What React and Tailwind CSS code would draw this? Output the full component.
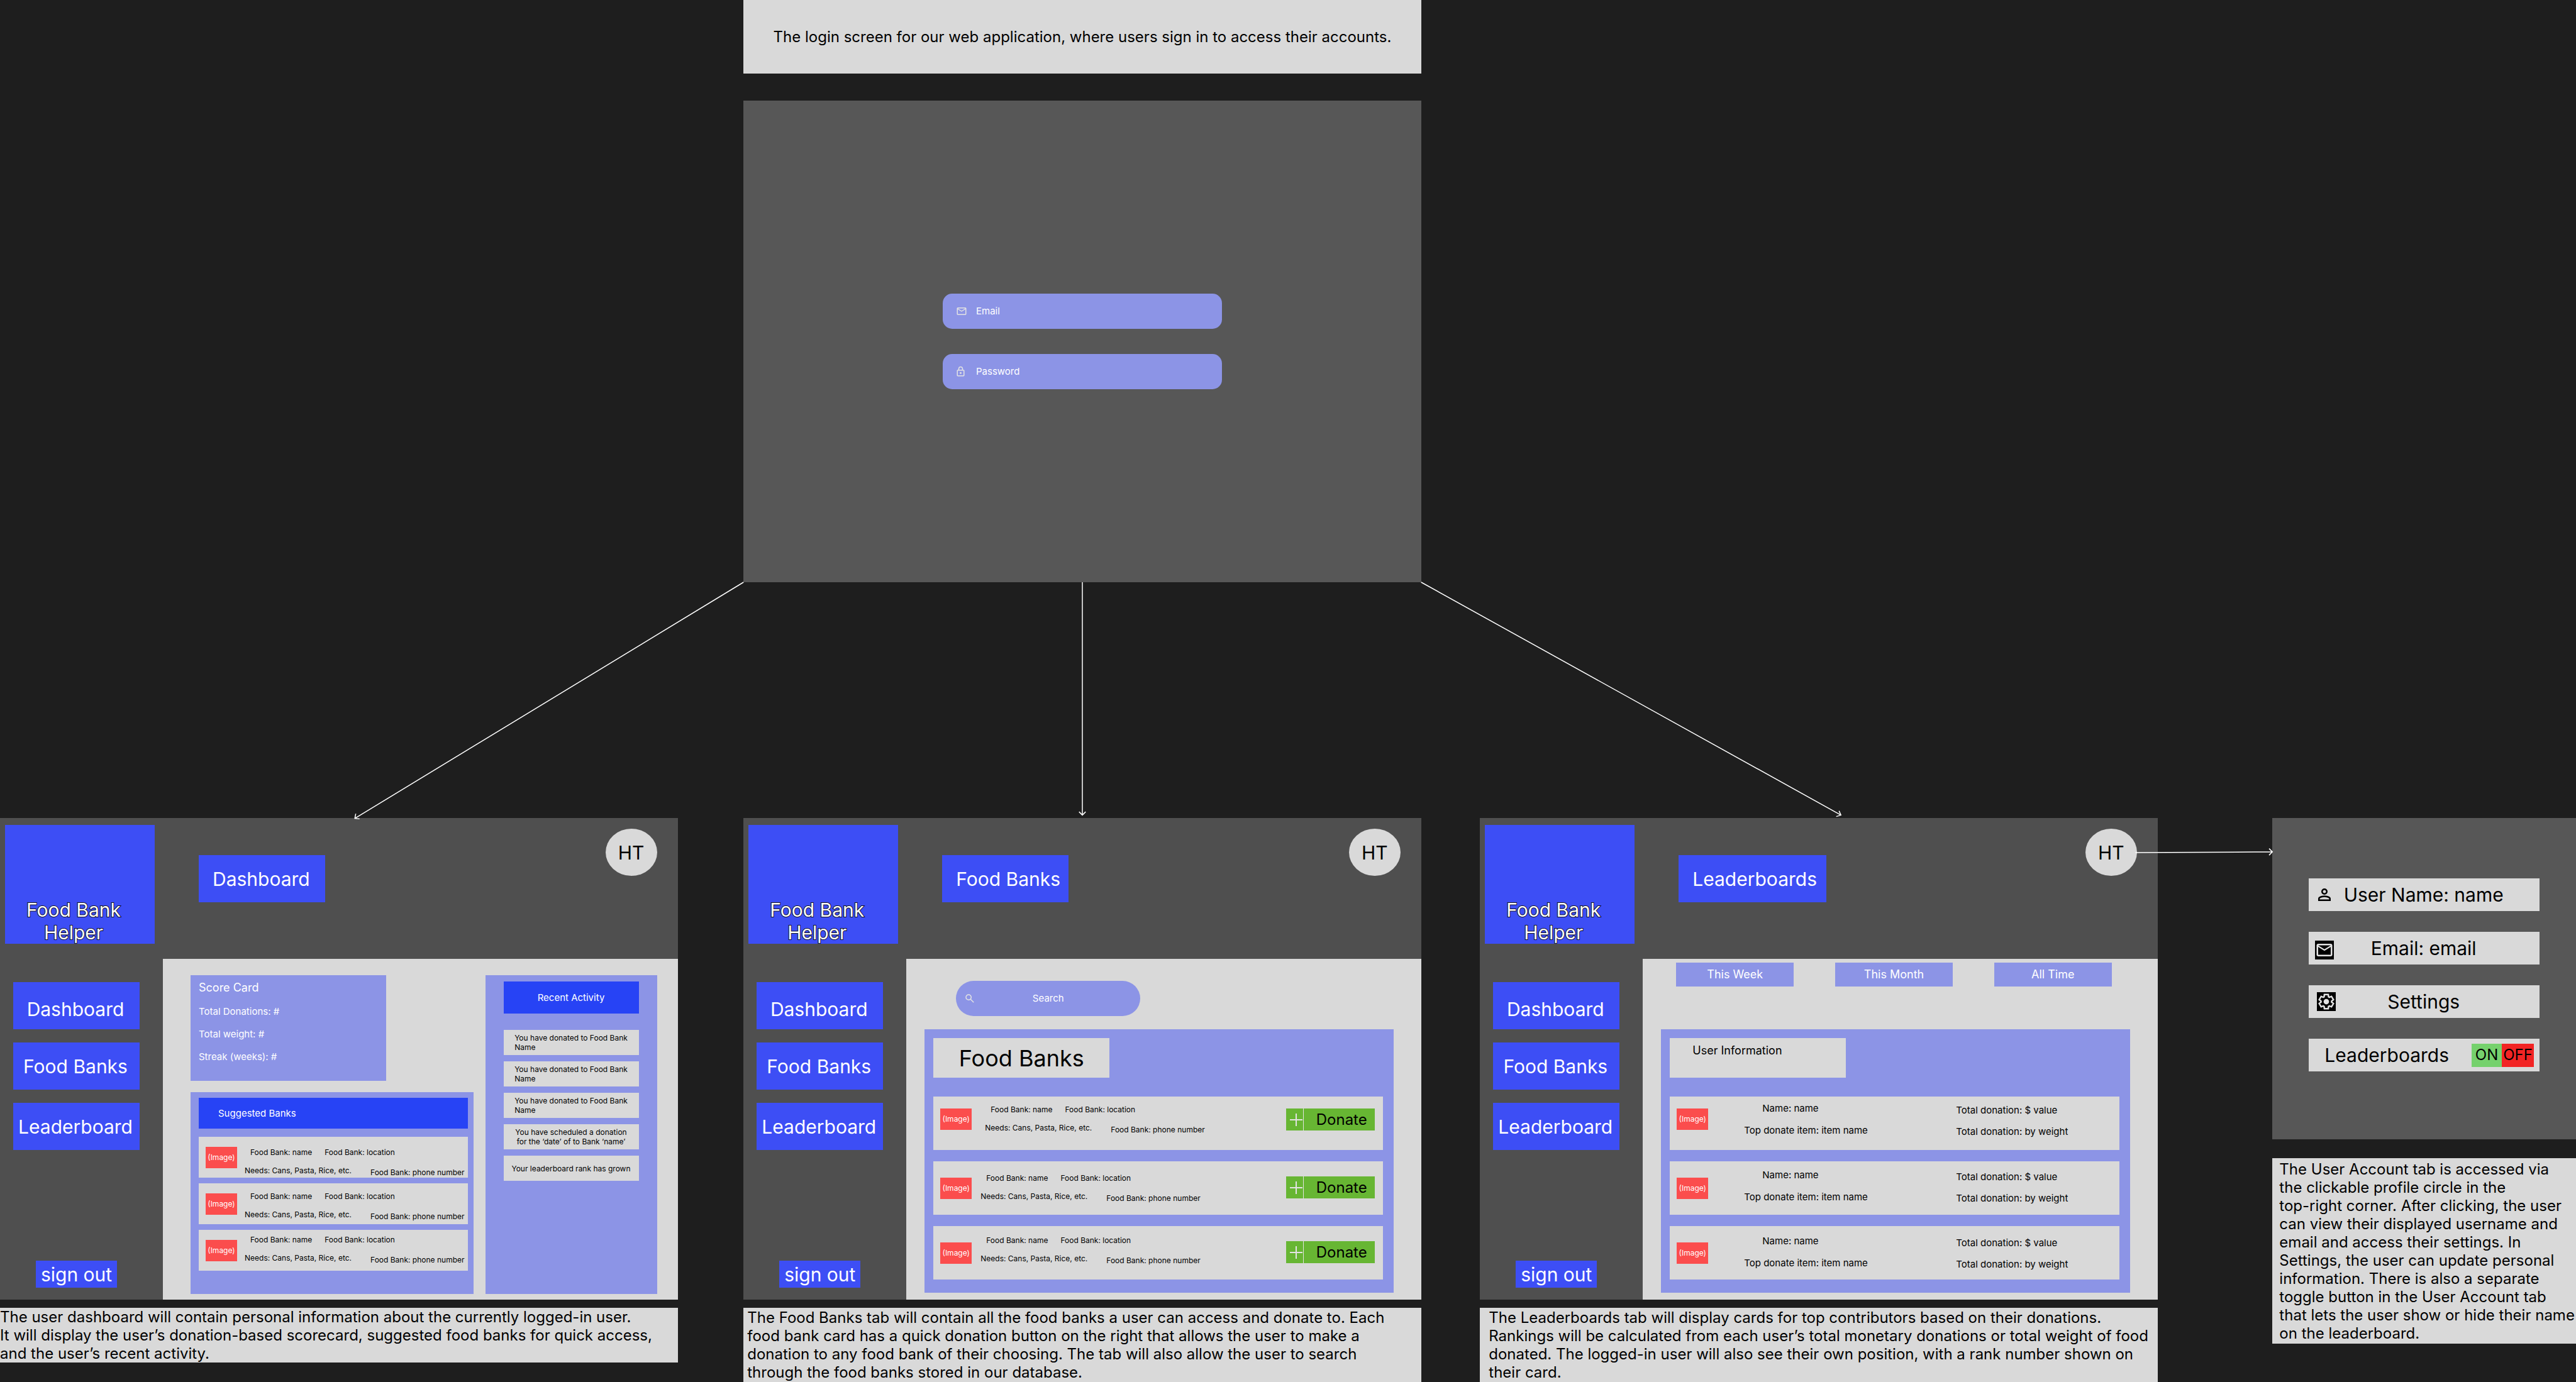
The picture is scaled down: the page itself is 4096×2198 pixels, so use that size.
import React from "react";

const MAIL =
  "M4 20q-.825 0-1.413-.588T2 18V6q0-.825.587-1.413T4 4h16q.825 0 1.413.587T22 6v12q0 .825-.587 1.413T20 20H4Zm8-7L4 8v10h16V8l-8 5Zm0-2 8-5H4l8 5ZM4 8V6v12V8Z";
const LOCK =
  "M6 22q-.825 0-1.412-.587Q4 20.825 4 20V10q0-.825.588-1.413Q5.175 8 6 8h1V6q0-2.075 1.463-3.538Q9.925 1 12 1t3.538 1.462Q17 3.925 17 6v2h1q.825 0 1.413.587Q20 9.175 20 10v10q0 .825-.587 1.413Q18.825 22 18 22Zm0-2h12V10H6v10Zm6-3q.825 0 1.413-.587Q14 15.825 14 15q0-.825-.587-1.413Q12.825 13 12 13q-.825 0-1.412.587Q10 14.175 10 15q0 .825.588 1.413Q11.175 17 12 17ZM9 8h6V6q0-1.25-.875-2.125T12 3q-1.25 0-2.125.875T9 6v2Z";
const SEARCH =
  "m19.6 21-6.3-6.3q-.75.6-1.725.95Q10.6 16 9.5 16q-2.725 0-4.612-1.887Q3 12.225 3 9.5q0-2.725 1.888-4.613Q6.775 3 9.5 3t4.613 1.887Q16 6.775 16 9.5q0 1.1-.35 2.075-.35.975-.95 1.725l6.3 6.3ZM9.5 14q1.875 0 3.188-1.312Q14 11.375 14 9.5q0-1.875-1.312-3.188Q11.375 5 9.5 5 7.625 5 6.312 6.312 5 7.625 5 9.5q0 1.875 1.312 3.188Q7.625 14 9.5 14Z";
const PERSON =
  "M12 12q-1.65 0-2.825-1.175T8 8q0-1.65 1.175-2.825T12 4q1.65 0 2.825 1.175T16 8q0 1.65-1.175 2.825T12 12Zm-8 8v-2.8q0-.85.438-1.562.437-.713 1.162-1.088 1.55-.775 3.15-1.163Q10.35 13 12 13t3.25.387q1.6.388 3.15 1.163.725.375 1.162 1.088Q20 16.35 20 17.2V20H4Zm2-2h12v-.8q0-.275-.137-.5-.138-.225-.363-.35-1.35-.675-2.725-1.013Q13.4 15 12 15t-2.775.337Q7.85 15.675 6.5 16.35q-.225.125-.362.35-.138.225-.138.5v.8Zm6-8q.825 0 1.413-.588Q14 8.825 14 8t-.587-1.412Q12.825 6 12 6q-.825 0-1.412.588Q10 7.175 10 8t.588 1.412Q11.175 10 12 10Z";
const GEAR =
  "m9.25 22-.4-3.2q-.325-.125-.612-.3-.288-.175-.563-.375L4.7 19.375l-2.75-4.75 2.575-1.95Q4.5 12.5 4.5 12.338v-.675q0-.163.025-.338L1.95 9.375l2.75-4.75 2.975 1.25q.275-.2.575-.375.3-.175.6-.3l.4-3.2h5.5l.4 3.2q.325.125.613.3.287.175.562.375l2.975-1.25 2.75 4.75-2.575 1.95q.025.175.025.338v.674q0 .163-.05.338l2.575 1.95-2.75 4.75-2.95-1.25q-.275.2-.575.375-.3.175-.6.3l-.4 3.2Z";

function Icon({ d, className, viewBox = "0 0 24 24" }) {
  return (
    <svg viewBox={viewBox} className={className} fill="currentColor" aria-hidden="true">
      <path d={d} />
    </svg>
  );
}

function GearIcon({ className }) {
  return (
    <svg viewBox="0 0 24 24" className={className} aria-hidden="true">
      <g transform="translate(1.2 1.2) scale(0.9)">
        <path d={GEAR} fill="none" stroke="currentColor" strokeWidth="2.2" />
      </g>
      <circle cx="12" cy="12" r="3.5" fill="currentColor" />
    </svg>
  );
}

function LoginField({ id, type, label, icon }) {
  return (
    <div className="flex h-14 w-[444px] items-center gap-[14px] rounded-[15px] bg-[#8c94e6] pl-[21px]">
      <label htmlFor={id} aria-label={label} className="text-[#e3e3e3]">
        {icon}
      </label>
      <input
        id={id}
        type={type}
        placeholder={label}
        className="min-w-0 flex-1 bg-transparent text-[15px] text-white outline-none placeholder:text-white"
      />
    </div>
  );
}

function NavButton({ children, className = "" }) {
  return (
    <button type="button" className={"h-[75px] w-[201px] bg-[#3d4ef5] pr-[3px] text-center " + className}>
      {children}
    </button>
  );
}

function Screen({ title, titleWidth = "w-[201px]", children }) {
  return (
    <section className="flex aspect-[1440/1024] flex-col bg-[#4f4f4f] text-[30px] leading-9 text-white">
      <header className="flex h-[224px] items-start pl-2 pr-[33px]">
        <div className="mt-[11px] flex h-[189px] w-[238px] items-end justify-center bg-[#3d4ef5] pr-[20px]">
          <p className="w-[160px] text-center [-webkit-text-stroke:2px_#101020] [paint-order:stroke_fill]">
            Food Bank Helper
          </p>
        </div>
        <h2
          className={
            "ml-[70px] mt-[59px] flex h-[75px] items-center whitespace-nowrap bg-[#3d4ef5] pl-[22px] " + titleWidth
          }
        >
          {title}
        </h2>
        <button
          type="button"
          className="ml-auto mt-[17px] h-[75px] w-[82px] rounded-[50%] bg-[#d9d9d9] text-black"
        >
          HT
        </button>
      </header>
      <div className="flex flex-1">
        <nav className="flex w-[259px] shrink-0 flex-col gap-[21px] pb-[19px] pl-[21px] pt-[37px]">
          <NavButton className="pt-[10px]">Dashboard</NavButton>
          <NavButton>Food Banks</NavButton>
          <NavButton>Leaderboard</NavButton>
          <button type="button" className="ml-9 mt-auto h-[43px] w-[129px] bg-[#3d4ef5]">
            sign out
          </button>
        </nav>
        <div className="flex min-w-0 flex-1 bg-[#d9d9d9]">{children}</div>
      </div>
    </section>
  );
}

function ImageBox({ className = "" }) {
  return (
    <div
      className={
        "ml-[11px] flex h-[34px] w-[50px] shrink-0 items-center justify-center bg-[#fb4d4d] text-xs text-white " +
        className
      }
    >
      (Image)
    </div>
  );
}

function BankInfo({ className = "" }) {
  return (
    <div className={"whitespace-nowrap text-xs leading-[15px] text-black " + className}>
      <div className="flex gap-5 pl-[9px]">
        <span>Food Bank: name</span>
        <span>Food Bank: location</span>
      </div>
      <div className="mt-[14px] flex gap-[30px]">
        <span>Needs: Cans, Pasta, Rice, etc.</span>
        <span className="pt-[3px]">Food Bank: phone number</span>
      </div>
    </div>
  );
}

const SUGGESTED = ["pt-[17px]", "pt-[13px]", "pt-[8px]"];

const ACTIVITY = [
  ["You have donated to Food Bank\nName", "text-left"],
  ["You have donated to Food Bank\nName", "text-left"],
  ["You have donated to Food Bank\nName", "text-left"],
  ["You have scheduled a donation\nfor the ‘date’ of to Bank ‘name’", "text-center"],
  ["Your leaderboard rank has grown", "text-center"],
];

function Dashboard() {
  return (
    <Screen title="Dashboard">
      <div className="flex flex-1 gap-[19px] pb-[9px] pl-11 pr-[33px] pt-[26px]">
        <div className="flex min-w-0 flex-1 flex-col gap-[18px]">
          <section className="flex h-[168px] w-[311px] flex-col gap-[18px] bg-[#8c94e6] pl-[13px] pt-[9px] text-[15px] leading-[18px]">
            <h3 className="text-lg leading-[22px]">Score Card</h3>
            <p>Total Donations: #</p>
            <p>Total weight: #</p>
            <p>Streak (weeks): #</p>
          </section>
          <section className="flex flex-1 flex-col bg-[#8c94e6] pl-[13px] pr-[9px] pt-[9px]">
            <h3 className="mb-[13px] flex h-[49px] items-center bg-[#2743f5] pl-[31px] text-[15px] leading-[18px]">
              Suggested Banks
            </h3>
            <ul className="flex flex-col gap-[9px]">
              {SUGGESTED.map((pad, i) => (
                <li key={i} className="flex h-[65px] items-start bg-[#d9d9d9]">
                  <ImageBox className="mt-4" />
                  <BankInfo className={"ml-3 " + pad} />
                </li>
              ))}
            </ul>
          </section>
        </div>
        <section className="w-[273px] bg-[#8c94e6] px-[29px] pt-[10px]">
          <h3 className="flex h-[51px] items-center justify-center bg-[#2743f5] text-[15px] leading-[18px]">
            Recent Activity
          </h3>
          <ul className="mt-[26px] flex flex-col gap-[10px] text-xs leading-[15px] text-black">
            {ACTIVITY.map(([text, align], i) => (
              <li key={i} className="flex h-10 items-center justify-center bg-[#d9d9d9]">
                <span className={"whitespace-pre " + align}>{text}</span>
              </li>
            ))}
          </ul>
        </section>
      </div>
    </Screen>
  );
}

const BANKS = [
  ["mt-[19px]", "ml-[21px] pt-[13px]", "mt-[19px]"],
  ["mt-[26px]", "ml-[14px] pt-[19px]", "mt-[24px]"],
  ["mt-[26px]", "ml-[14px] pt-[15px]", "mt-[24px]"],
];

function FoodBanks() {
  return (
    <Screen title="Food Banks">
      <div className="flex flex-1 flex-col pb-[11px] pl-[29px] pr-11 pt-[35px]">
        <div className="ml-[50px] flex h-14 w-[293px] items-center rounded-full bg-[#8c94e6] px-[13px]">
          <label htmlFor="bank-search" aria-label="Search" className="text-[#e3e3e3]">
            <Icon d={SEARCH} className="h-[18px] w-[18px]" />
          </label>
          <input
            id="bank-search"
            type="text"
            placeholder="Search"
            className="min-w-0 flex-1 bg-transparent pr-[18px] text-center text-[15px] text-white outline-none placeholder:text-white"
          />
        </div>
        <section className="mt-[21px] flex-1 bg-[#8c94e6] pl-[14px] pr-[17px] pt-[14px] text-black">
          <h3 className="mb-[30px] flex h-[63px] w-[280px] items-center justify-center bg-[#d9d9d9] text-4xl">
            Food Banks
          </h3>
          <ul className="flex flex-col gap-[18px]">
            {BANKS.map(([image, info, donate], i) => (
              <li key={i} className="flex h-[85px] items-start bg-[#d9d9d9] pr-[13px]">
                <ImageBox className={image} />
                <BankInfo className={info} />
                <button
                  type="button"
                  className={"ml-auto flex h-[35px] w-[141px] bg-[#67b633] text-2xl " + donate}
                >
                  <span className="flex h-full w-[28px] items-center justify-end border-r border-[#e3e3e3] pr-px">
                    <svg viewBox="0 0 20 20" className="h-5 w-5" stroke="#e3e3e3" strokeWidth="2">
                      <path d="M0 10H20M10 0V20" />
                    </svg>
                  </span>
                  <span className="flex h-full flex-1 items-center justify-center pl-2">Donate</span>
                </button>
              </li>
            ))}
          </ul>
        </section>
      </div>
    </Screen>
  );
}

const LEADERS = [
  ["mt-[19px]", "pt-[10px]"],
  ["mt-[26px]", "pt-[13px]"],
  ["mt-[26px]", "pt-[15px]"],
];

function Leaderboards() {
  return (
    <Screen title="Leaderboards" titleWidth="w-[235px]">
      <div className="flex flex-1 flex-col pb-[11px] pl-[29px] pr-11 pt-[6px]">
        <div className="flex justify-between pl-6 pr-[29px] text-lg">
          {["This Week", "This Month", "All Time"].map((t) => (
            <button key={t} type="button" className="h-[38px] w-[187px] bg-[#8c94e6]">
              {t}
            </button>
          ))}
        </div>
        <section className="mt-[68px] flex-1 bg-[#8c94e6] pl-[14px] pr-[17px] pt-[14px] text-black">
          <h3 className="mb-[30px] h-[63px] w-[280px] bg-[#d9d9d9] pl-[36px] pt-[9px] text-lg leading-[22px]">
            User Information
          </h3>
          <ul className="flex flex-col gap-[18px] text-[15px] leading-[18px]">
            {LEADERS.map(([image, info], i) => (
              <li key={i} className="flex h-[85px] items-start bg-[#d9d9d9]">
                <ImageBox className={image} />
                <div className={"flex pl-[57px] " + info}>
                  <div className="w-[337px]">
                    <p className="pl-[29px]">Name: name</p>
                    <p className="mt-[17px]">Top donate item: item name</p>
                  </div>
                  <div className="pt-[3px]">
                    <p>Total donation: $ value</p>
                    <p className="mt-4">Total donation: by weight</p>
                  </div>
                </div>
              </li>
            ))}
          </ul>
        </section>
      </div>
    </Screen>
  );
}

const ROW = "grid h-[52px] grid-cols-[44px_1fr_46px] bg-[#d9d9d9]";

function Account() {
  return (
    <section className="flex h-[511px] flex-col gap-[33px] bg-[#575757] px-[58px] pt-[96px] text-center text-[30px] leading-9 text-black">
      <div className={ROW}>
        <Icon d={PERSON} className="ml-[10px] mt-[11px] h-[30px] w-[30px]" />
        <p className="self-center whitespace-nowrap">User Name: name</p>
      </div>
      <div className={ROW}>
        <Icon d={MAIL} className="ml-[10px] mt-[14px] h-[30px] w-[30px] bg-black text-[#e3e3e3]" />
        <p className="self-center whitespace-nowrap">Email: email</p>
      </div>
      <button type="button" className={ROW}>
        <GearIcon className="ml-[13px] mt-[11px] h-[30px] w-[30px] bg-black text-[#e3e3e3]" />
        <span className="self-center">Settings</span>
      </button>
      <div className="flex h-[52px] items-center justify-between bg-[#d9d9d9] pl-[25px] pr-[9px]">
        <p>Leaderboards</p>
        <div className="flex text-2xl">
          <button type="button" className="h-[37px] w-12 bg-[#75d16d]">
            ON
          </button>
          <button type="button" className="h-[37px] w-[51px] bg-[#f22424]">
            OFF
          </button>
        </div>
      </div>
    </section>
  );
}

function Note({ children, className = "" }) {
  return (
    <p className={"whitespace-pre bg-[#d9d9d9] text-2xl leading-[29px] text-black " + className}>
      {children}
    </p>
  );
}

function LoginArrows() {
  return (
    <svg
      viewBox="0 0 5474 501"
      className="relative z-10 block w-full overflow-visible"
      fill="none"
      stroke="white"
      strokeWidth="2"
      aria-hidden="true"
    >
      <path d="M1580 0L754 502M756 492L754 502L764 503" />
      <path d="M2300 0V495M2293 488L2300 495L2307 488" />
      <path d="M3020 0L3912 495M3908 486L3912 495L3902 498" />
    </svg>
  );
}

function AccountArrow() {
  return (
    <svg
      viewBox="0 0 5474 200"
      className="pointer-events-none absolute inset-x-0 top-0 z-10 w-full"
      fill="none"
      stroke="white"
      strokeWidth="2"
      aria-hidden="true"
    >
      <path d="M4538 73.500L4829 72M4822 65L4829 72L4822 79" />
    </svg>
  );
}

const COLUMNS = "grid grid-cols-[1440fr_140fr_1440fr_125fr_1440fr_244fr_645fr]";

export default function App() {
  return (
    <main className="flex min-h-screen flex-col overflow-hidden bg-[#1e1e1e] font-['Inter',sans-serif]">
      <div className={COLUMNS}>
        <div className="col-start-3 flex flex-col gap-[43px]">
          <p className="flex h-[117px] items-center justify-center whitespace-nowrap bg-[#d9d9d9] text-2xl text-black">
            The login screen for our web application, where users sign in to access their accounts.
          </p>
          <form className="flex aspect-[1440/1024] flex-col items-center gap-[40px] bg-[#575757] pt-[307px]">
            <LoginField
              id="email"
              type="email"
              label="Email"
              icon={<Icon d={MAIL} className="h-[18px] w-[18px]" />}
            />
            <LoginField
              id="password"
              type="password"
              label="Password"
              icon={<Icon d={LOCK} viewBox="2 0 24 24" className="h-[18px] w-[18px]" />}
            />
          </form>
        </div>
      </div>
      <LoginArrows />
      <div className={COLUMNS + " relative flex-1"}>
        <AccountArrow />
        <div className="col-start-1 flex flex-col gap-[13px]">
          <Dashboard />
          <Note>
            {
              "The user dashboard will contain personal information about the currently logged-in user.\nIt will display the user’s donation-based scorecard, suggested food banks for quick access,\nand the user’s recent activity."
            }
          </Note>
        </div>
        <div className="col-start-3 flex flex-col gap-[13px]">
          <FoodBanks />
          <Note className="flex-1 pl-[6px] pt-px">
            {
              "The Food Banks tab will contain all the food banks a user can access and donate to. Each\nfood bank card has a quick donation button on the right that allows the user to make a\ndonation to any food bank of their choosing. The tab will also allow the user to search\nthrough the food banks stored in our database."
            }
          </Note>
        </div>
        <div className="col-start-5 flex flex-col gap-[13px]">
          <Leaderboards />
          <Note className="flex-1 pl-[14px] pt-px">
            {
              "The Leaderboards tab will display cards for top contributors based on their donations.\nRankings will be calculated from each user’s total monetary donations or total weight of food\ndonated. The logged-in user will also see their own position, with a rank number shown on\ntheir card."
            }
          </Note>
        </div>
        <div className="col-start-7 flex min-w-0 flex-col gap-[30px]">
          <Account />
          <Note className="pb-[2px] pl-[11px] pt-[3px]">
            {
              "The User Account tab is accessed via\nthe clickable profile circle in the\ntop-right corner. After clicking, the user\ncan view their displayed username and\nemail and access their settings. In\nSettings, the user can update personal\ninformation. There is also a separate\ntoggle button in the User Account tab\nthat lets the user show or hide their name\non the leaderboard."
            }
          </Note>
        </div>
      </div>
    </main>
  );
}
